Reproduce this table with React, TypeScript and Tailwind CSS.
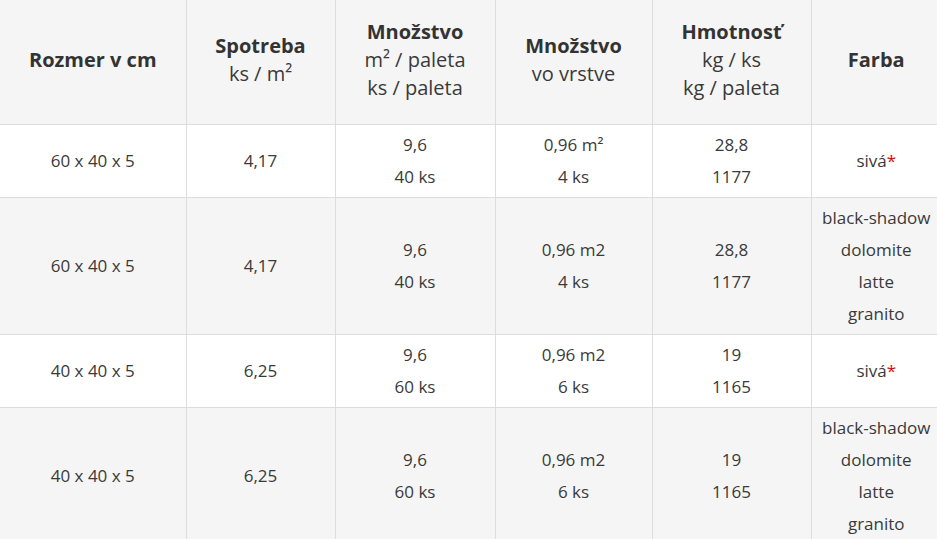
import React from "react";

const Red = () => <span className="text-[#e00]">*</span>;

type Row = {
  size: string;
  use: string;
  qty: string[];
  layer: string[];
  weight: string[];
  colors: React.ReactNode[];
  alt: boolean;
};

const colorsMulti = ["black-shadow", "dolomite", "latte", "granito"];

const rows: Row[] = [
  { size: "60 x 40 x 5", use: "4,17", qty: ["9,6", "40 ks"], layer: ["0,96 m²", "4 ks"], weight: ["28,8", "1177"], colors: [<>sivá<Red /></>], alt: false },
  { size: "60 x 40 x 5", use: "4,17", qty: ["9,6", "40 ks"], layer: ["0,96 m2", "4 ks"], weight: ["28,8", "1177"], colors: colorsMulti, alt: true },
  { size: "40 x 40 x 5", use: "6,25", qty: ["9,6", "60 ks"], layer: ["0,96 m2", "6 ks"], weight: ["19", "1165"], colors: [<>sivá<Red /></>], alt: false },
  { size: "40 x 40 x 5", use: "6,25", qty: ["9,6", "60 ks"], layer: ["0,96 m2", "6 ks"], weight: ["19", "1165"], colors: colorsMulti, alt: true },
];

const Lines = ({ items }: { items: React.ReactNode[] }) => (
  <>
    {items.map((t, i) => (
      <div key={i}>{t}</div>
    ))}
  </>
);

export default function App() {
  const th = "border-r border-[#dddddd] px-2 pt-[16px] pb-[20px] text-center align-middle font-normal";
  const td = "border-r border-[#dddddd] px-2 py-[4px] text-center align-middle";
  return (
    <div className="w-[937px] h-[539px] overflow-hidden bg-white" style={{ fontFamily: '"Open Sans", sans-serif' }}>
      <table className="table-fixed border-collapse w-[941px] text-[#3a3a3a]">
        <colgroup>
          <col className="w-[186px]" />
          <col className="w-[149px]" />
          <col className="w-[160px]" />
          <col className="w-[157px]" />
          <col className="w-[159px]" />
          <col className="w-[130px]" />
        </colgroup>
        <thead>
          <tr className="bg-[#f5f5f5] border-b border-[#dddddd] text-[20px] leading-[28px] h-[124px]">
            <th className={th}><div className="font-bold text-[#333]">Rozmer v cm</div></th>
            <th className={th}><div className="font-bold text-[#333]">Spotreba</div><div>ks / m²</div></th>
            <th className={th}><div className="font-bold text-[#333]">Množstvo</div><div>m² / paleta</div><div>ks / paleta</div></th>
            <th className={th}><div className="font-bold text-[#333]">Množstvo</div><div>vo vrstve</div></th>
            <th className={th}><div className="font-bold text-[#333]">Hmotnosť</div><div>kg / ks</div><div>kg / paleta</div></th>
            <th className={th + " border-r-0"}><div className="font-bold text-[#333]">Farba</div></th>
          </tr>
        </thead>
        <tbody className="text-[17px] leading-[32px]">
          {rows.map((r, i) => (
            <tr key={i} className={(r.alt ? "bg-[#f5f5f5] " : "bg-white ") + "border-b border-[#dddddd]"}>
              <td className={td}>{r.size}</td>
              <td className={td}>{r.use}</td>
              <td className={td}><Lines items={r.qty} /></td>
              <td className={td}><Lines items={r.layer} /></td>
              <td className={td}><Lines items={r.weight} /></td>
              <td className={td + " border-r-0"}><Lines items={r.colors} /></td>
            </tr>
          ))}
        </tbody>
      </table>
    </div>
  );
}
